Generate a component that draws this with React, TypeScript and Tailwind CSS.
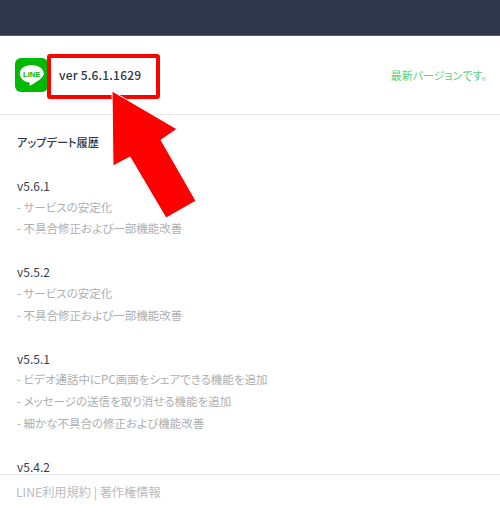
const font = { fontFamily: '"Noto Sans CJK JP", "Noto Sans", sans-serif' };

const releases = [
  { version: "v5.6.1", notes: ["- サービスの安定化", "- 不具合修正および一部機能改善"] },
  { version: "v5.5.2", notes: ["- サービスの安定化", "- 不具合修正および一部機能改善"] },
  {
    version: "v5.5.1",
    notes: [
      "- ビデオ通話中にPC画面をシェアできる機能を追加",
      "- メッセージの送信を取り消せる機能を追加",
      "- 細かな不具合の修正および機能改善",
    ],
  },
  { version: "v5.4.2", notes: [] },
];

function LineLogo() {
  return (
    <svg width="33" height="34" viewBox="0 0 33 34" className="shrink-0">
      <rect width="33" height="34" rx="6" fill="#00b900" />
      <path
        d="M16.5 7C9.600 7 4.800 10.800 4.800 15.800c0 4.500 3.900 8 9.300 8.700.8.200.6 1 .4 2.400-.1.600.4.800 1 .5 2.700-1.500 9.300-5.400 11.800-8.500 1-1.300 1.500-2.600 1.500-3.500C28.800 10.800 23.400 7 16.500 7z"
        fill="#fff"
      />
      <text x="16.6" y="18.600" textAnchor="middle" fontSize="7.500" fontWeight="700" fill="#00b900" fontFamily="Liberation Sans, sans-serif">
        LINE
      </text>
    </svg>
  );
}

export default function App() {
  return (
    <div className="relative w-[500px] h-[517px] overflow-hidden bg-white flex flex-col [font-feature-settings:'palt']" style={font}>
      {/* Top bar */}
      <div className="h-[36px] shrink-0 bg-[#2e364a] border-b border-[#555b69]" />

      {/* Version row */}
      <div className="h-[79px] shrink-0 flex items-center justify-between pl-[15px] pr-[13px] border-b border-[#e6e7ea]">
        <div className="flex items-center">
          <LineLogo />
          <span className="ml-[11px] text-[12px] tracking-[0.2px] font-medium text-[#2f3645]">ver 5.6.1.1629</span>
        </div>
        <span className="text-[11px] text-[#5bd07a]">最新バージョンです。</span>
      </div>

      {/* Update history */}
      <div className="flex-1 min-h-0 overflow-hidden pl-[17px] pt-[17px]">
        <h2 className="text-[11.2px] leading-[21px] font-medium text-[#2f3645] mb-[22px]">アップデート履歴</h2>
        {releases.map((r) => (
          <div key={r.version} className="mb-[21.6px]">
            <div className="text-[12px] leading-[21.6px] text-[#3a4150]">{r.version}</div>
            {r.notes.map((n, i) => (
              <div key={i} className="text-[11.5px] leading-[21.6px] text-[#adafb2]">
                {n}
              </div>
            ))}
          </div>
        ))}
      </div>

      {/* Footer */}
      <div className="h-[43px] shrink-0 border-t border-[#e6e7ea] pl-[16px] pt-[7px] text-[12.2px] leading-[20px] text-[#b9bcc1]">
        LINE利用規約 | 著作権情報
      </div>

      {/* Annotation overlays */}
      <div className="absolute left-[47px] top-[54px] w-[113px] h-[45px] border-[4px] border-[#ff0000] rounded-[3px]" />
      <svg className="absolute left-0 top-0" width="500" height="517" viewBox="0 0 500 517">
        <polygon
          points="112,91 177,129 161,140 196,201 166,218 130,157 113,166"
          fill="#ff0000"
          stroke="#fff"
          strokeWidth="1"
        />
      </svg>
    </div>
  );
}
